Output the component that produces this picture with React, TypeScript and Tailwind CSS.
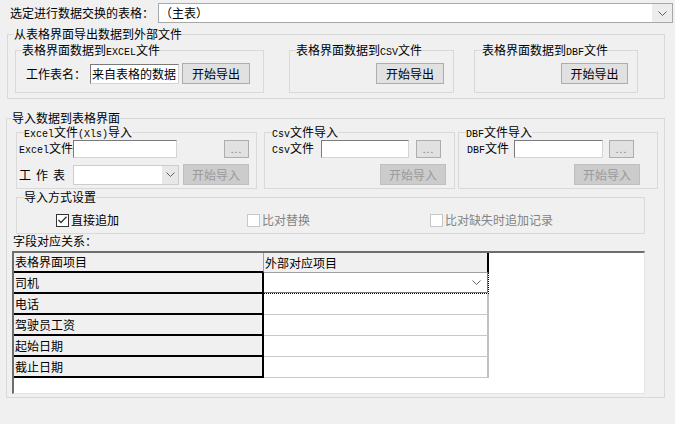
import React from 'react'

function L({ children }: { children: React.ReactNode }) {
  return <span className="font-['Liberation_Mono',monospace] text-[10px]">{children}</span>
}

function Group({
  title,
  className,
  legendClass,
  children,
}: {
  title: React.ReactNode
  className: string
  legendClass: string
  children: React.ReactNode
}) {
  return (
    <fieldset className={`border border-[#d9d9d9] ${className}`}>
      <legend className={`h-[12px] leading-[12px] whitespace-nowrap ${legendClass}`}>{title}</legend>
      {children}
    </fieldset>
  )
}

function Chevron() {
  return (
    <svg width="9" height="5" viewBox="0 0 9 5">
      <polyline points="0.5,0.5 4.5,4.5 8.5,0.5" fill="none" stroke="#606060" strokeWidth="1" />
    </svg>
  )
}

function TextBox({ className, children }: { className: string; children?: React.ReactNode }) {
  return (
    <div
      className={`shrink-0 bg-white border-t border-l border-r border-b border-t-[#7a7a7a] border-l-[#7a7a7a] border-r-[#d4d4d4] border-b-[#d4d4d4] overflow-hidden whitespace-nowrap flex items-center pl-[1px] ${className}`}
    >
      {children}
    </div>
  )
}

function Dots({ className }: { className: string }) {
  return (
    <div
      className={`shrink-0 w-[25px] h-[18px] bg-[#e1e1e1] border border-[#adadad] flex items-end justify-center pb-[4px] text-[#7a7a7a] text-[10px] leading-[8px] tracking-[1px] ${className}`}
    >
      ...
    </div>
  )
}

function Btn({ disabled, className, children }: { disabled?: boolean; className: string; children: React.ReactNode }) {
  return (
    <div
      className={`shrink-0 h-[21px] flex items-center justify-center border ${
        disabled ? 'bg-[#cccccc] border-[#bfbfbf] text-[#9a9a9a]' : 'bg-[#e1e1e1] border-[#adadad] text-black'
      } ${className}`}
    >
      {children}
    </div>
  )
}

function Check({ checked, disabled, label, className }: { checked?: boolean; disabled?: boolean; label: string; className: string }) {
  return (
    <div className={`flex items-center ${className}`}>
      <div
        className={`w-[13px] h-[13px] bg-white border flex items-center justify-center ${
          disabled ? 'border-[#c8c8c8]' : 'border-[#333333]'
        }`}
      >
        {checked && (
          <svg width="9" height="8" viewBox="0 0 9 8">
            <polyline points="0.5,4 3,6.5 8.5,0.8" fill="none" stroke="#333333" strokeWidth="1.3" />
          </svg>
        )}
      </div>
      <span className={`ml-[2px] ${disabled ? 'text-[#838383]' : 'text-black'}`}>{label}</span>
    </div>
  )
}

const rows = ['司机', '电话', '驾驶员工资', '起始日期', '截止日期']

export default function App() {
  return (
    <div className="w-[675px] h-[424px] overflow-hidden bg-[#f0f0f0] text-[12px] leading-[12px] text-black font-['Noto_Sans_CJK_SC',sans-serif]">
      {/* 选定表格 */}
      <div className="flex items-center h-[20px] mt-[3px] pl-[10px]">
        <span className="w-[148px]">选定进行数据交换的表格：</span>
        <div className="flex w-[515px] h-[20px] bg-white border border-[#a8a8a8]">
          <span className="flex-1 flex items-center pl-[1px]">（主表）</span>
          <span className="w-[20px] bg-[#ececec] flex items-center justify-center">
            <Chevron />
          </span>
        </div>
      </div>

      {/* 导出 */}
      <Group title="从表格界面导出数据到外部文件" className="mt-[5px] ml-[7px] w-[658px] pb-[5px]" legendClass="ml-[6px]">
        <div className="flex mt-[4px]">
          <Group
            title={<>表格界面数据到<L>EXCEL</L>文件</>}
            className="ml-[7px] w-[249px] pb-[8px]"
            legendClass="ml-[6px]"
          >
            <div className="flex items-center mt-[7px] pl-[10px]">
              <span className="w-[64px] whitespace-nowrap">工作表名：</span>
              <TextBox className="w-[89px] h-[20px]">来自表格的数据</TextBox>
              <Btn className="ml-[3px] w-[68px]">开始导出</Btn>
            </div>
          </Group>
          <Group
            title={<>表格界面数据到<L>CSV</L>文件</>}
            className="ml-[25px] w-[165px] pb-[8px]"
            legendClass="ml-[6px]"
          >
            <div className="flex justify-end mt-[7px] pr-[9px]">
              <Btn className="w-[68px]">开始导出</Btn>
            </div>
          </Group>
          <Group
            title={<>表格界面数据到<L>DBF</L>文件</>}
            className="ml-[20px] w-[164px] pb-[8px]"
            legendClass="ml-[7px]"
          >
            <div className="flex justify-end mt-[7px] pr-[9px]">
              <Btn className="w-[67px]">开始导出</Btn>
            </div>
          </Group>
        </div>
      </Group>

      {/* 导入 */}
      <Group title="导入数据到表格界面" className="mt-[13px] ml-[6px] w-[659px] pb-[3px]" legendClass="ml-[5px]">
        <div className="flex mt-[2px]">
          <Group
            title={<><L>Excel</L>文件<L>(Xls)</L>导入</>}
            className="ml-[9px] w-[241px] pb-[3px]"
            legendClass="ml-[7px]"
          >
            <div className="flex items-center mt-[2px] pl-[2px] h-[18px]">
              <span className="w-[54px] shrink-0 whitespace-nowrap"><L>Excel</L>文件</span>
              <TextBox className="w-[104px] h-[18px]" />
              <Dots className="ml-[47px]" />
            </div>
            <div className="flex items-center mt-[6px] pl-[2px] h-[21px]">
              <span className="w-[54px] shrink-0 whitespace-nowrap tracking-[5px]">工作表</span>
              <div className="flex shrink-0 w-[106px] h-[20px] bg-white border border-[#cccccc]">
                <span className="flex-1" />
                <span className="w-[16px] bg-[#e8e8e8] flex items-center justify-center">
                  <Chevron />
                </span>
              </div>
              <Btn disabled className="ml-[4px] w-[66px]">开始导入</Btn>
            </div>
          </Group>
          <Group
            title={<><L>Csv</L>文件导入</>}
            className="ml-[7px] w-[191px] pb-[3px]"
            legendClass="ml-[7px]"
          >
            <div className="flex items-center mt-[2px] pl-[7px] h-[18px]">
              <span className="w-[49px] shrink-0 whitespace-nowrap"><L>Csv</L>文件</span>
              <TextBox className="w-[88px] h-[18px]" />
              <Dots className="ml-[7px]" />
            </div>
            <div className="flex justify-end mt-[6px] pr-[8px] h-[21px]">
              <Btn disabled className="w-[66px]">开始导入</Btn>
            </div>
          </Group>
          <Group
            title={<><L>DBF</L>文件导入</>}
            className="ml-[3px] w-[200px] pb-[3px]"
            legendClass="ml-[7px]"
          >
            <div className="flex items-center mt-[2px] pl-[8px] h-[18px]">
              <span className="w-[47px] shrink-0 whitespace-nowrap"><L>DBF</L>文件</span>
              <TextBox className="w-[89px] h-[18px]" />
              <Dots className="ml-[6px]" />
            </div>
            <div className="flex justify-end mt-[6px] pr-[17px] h-[21px]">
              <Btn disabled className="w-[66px]">开始导入</Btn>
            </div>
          </Group>
        </div>

        <Group title="导入方式设置" className="mt-[2px] ml-[9px] w-[629px] pb-[6px]" legendClass="ml-[7px]">
          <div className="flex items-center mt-[10px] pl-[39px] h-[14px]">
            <Check checked label="直接追加" className="w-[191px]" />
            <Check disabled label="比对替换" className="w-[183px]" />
            <Check disabled label="比对缺失时追加记录" className="w-[180px]" />
          </div>
        </Group>

        <div className="mt-[1px] ml-[6px] h-[12px]">字段对应关系：</div>

        {/* 字段表格 */}
        <div className="mt-[4px] ml-[5px] w-[633px] h-[143px] bg-white border-t-2 border-l-2 border-r border-b border-t-[#6d6d6d] border-l-[#6d6d6d] border-r-[#e3e3e3] border-b-[#e3e3e3]">
          <div className="flex h-[20px]">
            <div className="w-[250px] bg-[#f0f0f0] border-r border-b-2 border-r-[#a0a0a0] border-b-black flex items-center pl-[1px]">
              表格界面项目
            </div>
            <div className="w-[225px] bg-[#f0f0f0] border-r-2 border-b border-r-black border-b-[#a0a0a0] flex items-center pl-[1px]">
              外部对应项目
            </div>
          </div>
          {rows.map((r, i) => (
            <div key={r} className="flex h-[21px]">
              <div className="w-[250px] bg-[#f0f0f0] border-r-2 border-b-2 border-black flex items-center pl-[1px]">
                {r}
              </div>
              {i === 0 ? (
                <div className="w-[225px] border-r border-b border-dotted border-black">
                  <div className="h-full border-r border-b border-[#7a7a7a] flex items-center justify-end pr-[6px]">
                    <Chevron />
                  </div>
                </div>
              ) : (
                <div className="w-[225px] border-r-2 border-b border-r-[#c0c0c0] border-b-[#c8c8c8]" />
              )}
            </div>
          ))}
        </div>
      </Group>
    </div>
  )
}
